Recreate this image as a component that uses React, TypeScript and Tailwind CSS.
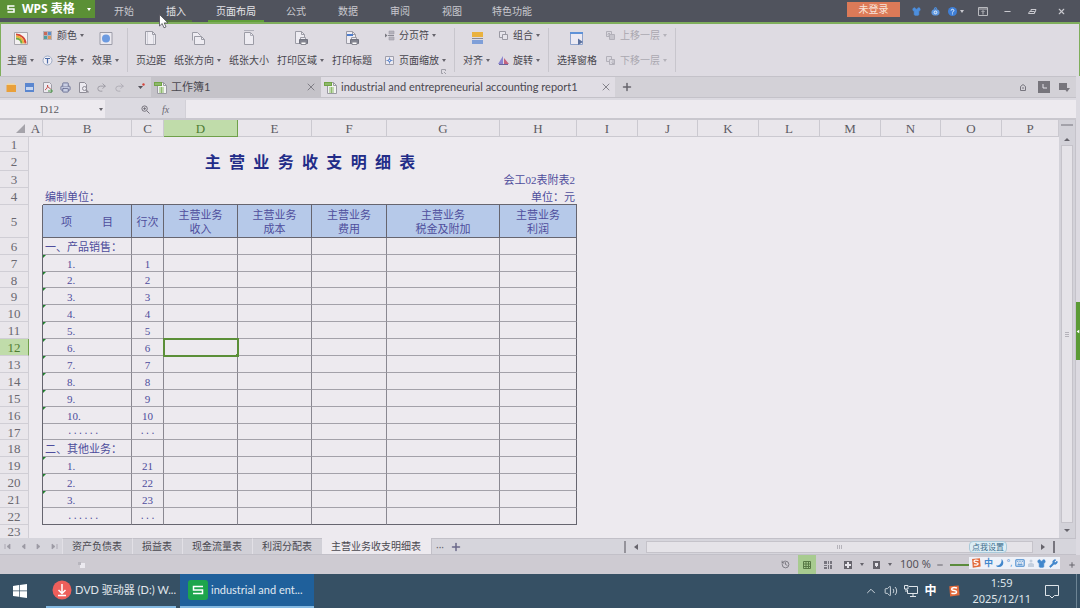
import React from 'react';
import { Volume2, ChevronUp, Undo2, Redo2, X, Plus, Minus, History, Printer, Shirt, Wrench, Keyboard } from 'lucide-react';

interface Column {
  id: string;
  width: string;
}

interface Row {
  id: number;
  height: string;
  item?: string;
  line?: string;
  heading?: boolean;
  marked?: boolean;
}

const menus = ['开始', '插入', '页面布局', '公式', '数据', '审阅', '视图', '特色功能'];
const sheets = ['资产负债表', '损益表', '现金流量表', '利润分配表', '主营业务收支明细表'];

const columns: Column[] = [
  { id: 'A', width: 'w-[14px]' },
  { id: 'B', width: 'w-[89px]' },
  { id: 'C', width: 'w-[32px]' },
  { id: 'D', width: 'w-[74px]' },
  { id: 'E', width: 'w-[74px]' },
  { id: 'F', width: 'w-[75px]' },
  { id: 'G', width: 'w-[113px]' },
  { id: 'H', width: 'w-[77px]' },
  { id: 'I', width: 'w-[61px]' },
  { id: 'J', width: 'w-[60px]' },
  { id: 'K', width: 'w-[61px]' },
  { id: 'L', width: 'w-[61px]' },
  { id: 'M', width: 'w-[61px]' },
  { id: 'N', width: 'w-[60px]' },
  { id: 'O', width: 'w-[61px]' },
  { id: 'P', width: '' },
];

const headings = [
  ['主营业务', '收入'],
  ['主营业务', '成本'],
  ['主营业务', '费用'],
  ['主营业务', '税金及附加'],
  ['主营业务', '利润'],
];

const rows: Row[] = [
  { id: 6, height: 'h-[17px]', item: '一、产品销售：', heading: true },
  { id: 7, height: 'h-[17px]', item: '1.', line: '1', marked: true },
  { id: 8, height: 'h-[16px]', item: '2.', line: '2', marked: true },
  { id: 9, height: 'h-[17px]', item: '3.', line: '3', marked: true },
  { id: 10, height: 'h-[17px]', item: '4.', line: '4', marked: true },
  { id: 11, height: 'h-[17px]', item: '5.', line: '5', marked: true },
  { id: 12, height: 'h-[17px]', item: '6.', line: '6', marked: true },
  { id: 13, height: 'h-[17px]', item: '7.', line: '7', marked: true },
  { id: 14, height: 'h-[17px]', item: '8.', line: '8', marked: true },
  { id: 15, height: 'h-[17px]', item: '9.', line: '9', marked: true },
  { id: 16, height: 'h-[17px]', item: '10.', line: '10', marked: true },
  { id: 17, height: 'h-[16px]', item: '......', line: '...' },
  { id: 18, height: 'h-[17px]', item: '二、其他业务：', heading: true },
  { id: 19, height: 'h-[17px]', item: '1.', line: '21', marked: true },
  { id: 20, height: 'h-[17px]', item: '2.', line: '22', marked: true },
  { id: 21, height: 'h-[17px]', item: '3.', line: '23', marked: true },
  { id: 22, height: 'h-[17px]', item: '......', line: '...' },
];

const Caret = ({ className = 'text-[#66646c]' }: { className?: string }) => (
  <svg viewBox="0 0 4 3" className={`h-[3px] w-1 shrink-0 ${className}`} fill="currentColor">
    <path d="M0 0h4L2 3z" />
  </svg>
);

const PageIcon = ({ kind }: { kind: 'margin' | 'turn' | 'size' | 'area' | 'title' }) => (
  <svg viewBox="0 0 16 16" className="h-4 w-4" fill="#eeecf2" stroke="#9c9ca6" strokeWidth="1">
    {kind === 'margin' && (
      <>
        <path d="M2.500 1.500h7l3 3v10h-10z" />
        <path d="M9.500 1.500v3h3" fill="none" />
        <path d="M4.500 2v12M10.500 5v9" fill="none" stroke="#cfcfd8" />
      </>
    )}
    {kind === 'turn' && (
      <>
        <path d="M2.500 10.500v-8h5l3 3" />
        <path d="M4.500 6.500h7l3 3v5h-10z" />
        <path d="M11.500 6.500v3h3" fill="none" />
      </>
    )}
    {kind === 'size' && (
      <>
        <path d="M3.500 2.500h6l3 3v9h-9z" />
        <path d="M9.500 2.500v3h3M3 .500h10" fill="none" stroke="#b0b0ba" />
      </>
    )}
    {(kind === 'area' || kind === 'title') && (
      <>
        <path d="M2.500 1.500h6l3 3v9h-9z" />
        <path d="M8.500 1.500v3h3" fill="none" />
        {kind === 'title' && <path d="M3 5h6" stroke="#4f7dcc" strokeWidth="2" />}
        <path d="M7.500 7.500h5v3h-5z" />
        <path d="M6.500 9.500h8v4h-8z" fill="#80828e" stroke="#70727e" />
        <path d="M8 12h5v2.500H8z" fill="#fff" stroke="#8a8a94" />
      </>
    )}
  </svg>
);

const ThemeIcon = () => (
  <svg viewBox="0 0 16 16" className="h-4 w-4" fill="none">
    <path d="M1.500 2.500h13v12h-13z" fill="#f4f1f2" stroke="#a9a7ae" />
    <path d="M3 4.500c5 0 9.500 4 9.500 9" stroke="#d4473a" strokeWidth="2" />
    <path d="M3 6.500c4 0 7.500 3 7.500 7" stroke="#efb23a" strokeWidth="2" />
    <path d="M3 8.500c3 0 5.500 2 5.500 5" stroke="#71a943" strokeWidth="2" />
  </svg>
);

const EffectIcon = () => (
  <svg viewBox="0 0 16 16" className="h-4 w-4">
    <path d="M2 2.500h12v12H2z" fill="#ebe9f0" stroke="#9c9ca8" />
    <circle cx="8" cy="8.500" r="4" fill="#6c9ae0" />
  </svg>
);

const AlignIcon = () => (
  <svg viewBox="0 0 16 16" className="h-4 w-4">
    <path d="M3 2h11v5H3z" fill="#eab23f" />
    <path d="M3 8.500h11" stroke="#8a8a92" />
    <path d="M3 10h11v4H3z" fill="#7f9fd8" />
  </svg>
);

const PaneIcon = () => (
  <svg viewBox="0 0 16 16" className="h-4 w-4">
    <path d="M1.500 2.500h12v12h-12z" fill="#eceaf3" stroke="#8fa3cb" />
    <path d="M1 2h13v2H1z" fill="#5f92d8" />
    <path d="M9 8.500l5 3.500-5 3z" fill="#5b719e" />
  </svg>
);

const ColorsIcon = () => (
  <svg viewBox="0 0 11 11" className="h-[11px] w-[11px]">
    <path d="M1 1h9v9H1z" fill="#b3b1ba" />
    <path d="M2 2h3v3H2z" fill="#c96a58" />
    <path d="M6 2h3v3H6z" fill="#5c8fca" />
    <path d="M2 6h3v3H2z" fill="#4f9f9e" />
    <path d="M6 6h3v3H6z" fill="#d8955a" />
  </svg>
);

const FontIcon = () => (
  <svg viewBox="0 0 11 11" className="h-[11px] w-[11px]" fill="none">
    <circle cx="5.500" cy="5.500" r="4.500" fill="#f0eef5" stroke="#9dabc4" />
    <path d="M3 3.500h5M5.500 3.500v5" stroke="#4d6da8" strokeWidth="1.200" />
  </svg>
);

const BreakIcon = () => (
  <svg viewBox="0 0 11 11" className="h-[11px] w-[11px]">
    <path d="M1 3.500l2.500 2L1 7.500z" fill="#787880" />
    <path d="M5 1h5v3H5zM5 7h5v3H5z" fill="#b5b3bc" stroke="#a09fa8" strokeWidth=".600" />
    <path d="M4 5.500h6" stroke="#8b8a94" />
  </svg>
);

const ScaleIcon = () => (
  <svg viewBox="0 0 11 11" className="h-[11px] w-[11px]" fill="none">
    <path d="M1.500 1.500h8v8h-8z" fill="#eceaf1" stroke="#a09fab" />
    <path d="M5.500 2.500v6M2.500 5.500h6" stroke="#6f92cc" />
    <path d="M4.500 4.500h2v2h-2z" fill="#eceaf1" stroke="#4f7dcc" strokeWidth=".700" />
  </svg>
);

const GroupIcon = () => (
  <svg viewBox="0 0 11 11" className="h-[11px] w-[11px]" fill="#e6e4eb" stroke="#9a99a3">
    <path d="M1.500 1.500h6v6h-6z" />
    <path d="M4.500 4.500h5v5h-5z" />
  </svg>
);

const RotateIcon = () => (
  <svg viewBox="0 0 11 11" className="h-[11px] w-[11px]">
    <path d="M5 1v8H0z" fill="#8b86d0" />
    <path d="M6 3l5 6H6z" fill="#c4627f" />
    <path d="M1 9.500h9" stroke="#68649c" />
  </svg>
);

const LayerIcon = ({ down }: { down?: boolean }) => (
  <svg viewBox="0 0 11 11" className="h-[11px] w-[11px]" fill="#dad8df" stroke="#b2b0b9">
    <path d="M1.500 1.500h5v5h-5z" />
    <path d="M4.500 4.500h5v5h-5z" fill={down ? '#dad8df' : '#c6c4cc'} />
    {down ? <path d="M8 5v4M6.500 7.500L8 9l1.500-1.500" fill="none" /> : <path d="M4 7V3M2.500 4.500L4 3l1.500 1.500" fill="none" />}
  </svg>
);

const SheetFileIcon = () => (
  <svg viewBox="0 0 13 13" className="h-[13px] w-[13px] shrink-0">
    <path d="M3.500 1.500h6l3 3v8h-9z" fill="#f3f3f3" stroke="#9a9aa2" />
    <path d="M9.500 1.500v3h3" fill="none" stroke="#9a9aa2" />
    <path d="M0 1h8v4H0z" fill="#71a545" />
    <path d="M1.500 3h5" stroke="#e6f1dc" strokeDasharray="1 1" />
    <path d="M5 7h5M5 9h5M5 11h5M7.500 6v6" stroke="#8fbb6c" />
  </svg>
);

const SogouIcon = ({ className }: { className: string }) => (
  <svg viewBox="0 0 14 14" className={className} fill="none">
    <path d="M1.500 1.500L12.500.500l1 11.500-11 1.500z" fill="#e2693a" />
    <path d="M10.500 3.500C7 2.500 4 3 4.300 5c.300 2 5.700 1 5.700 3.200 0 2-3.500 2-6 1.300" stroke="#fff" strokeWidth="1.800" />
  </svg>
);

interface ButtonProps {
  icon: React.ReactNode;
  label: string;
  caret?: boolean;
  muted?: boolean;
}

const LargeButton = ({ icon, label, caret }: ButtonProps) => (
  <button className="flex flex-col items-center justify-between pt-1 pb-2">
    <span className="flex h-5 items-center">{icon}</span>
    <span className="flex items-center gap-[3px] leading-4">
      {label}
      {caret && <Caret />}
    </span>
  </button>
);

const SmallButton = ({ icon, label, caret = true, muted }: ButtonProps) => (
  <button className={`flex items-center gap-1 leading-4 ${muted ? 'text-[#aaa8b0]' : ''}`}>
    {icon}
    <span className="flex items-center gap-[3px]">
      {label}
      {caret && <Caret className={muted ? 'text-[#b4b2ba]' : 'text-[#66646c]'} />}
    </span>
  </button>
);

const Stack = ({ children }: { children: React.ReactNode }) => (
  <div className="flex flex-col justify-between pt-[3px] pb-2">{children}</div>
);

const Divider = () => <div className="my-1 w-px bg-[#c8c6cd]" />;

const TitleBar = () => (
  <header className="flex h-[22px] shrink-0 justify-between bg-[#50535d] text-[#c9c9cf]">
    <div className="flex">
      <button className="mr-[3px] flex h-[18px] w-[95px] items-center bg-[#5b9035] pl-[7px] text-xs font-bold text-white">
        <svg viewBox="0 0 8 8" className="mr-[7px] h-2 w-2" fill="none" stroke="#fff" strokeWidth="1.500">
          <path d="M7.500 1H1v3h6v3H.500" />
        </svg>
        WPS 表格
        <span className="ml-auto pr-1">
          <Caret className="text-white" />
        </span>
      </button>
      <nav className="flex">
        {menus.map((name) => (
          <button
            key={name}
            className={`border-b-2 pt-[3px] ${name.length > 2 ? 'mx-1.5 px-2' : 'mx-2.5 px-1.5'} ${
              name === '页面布局' ? 'border-[#62a03a] text-[#e4e4e8]' : name === '插入' ? 'border-[#55743f] text-[#e4e4e8]' : 'border-transparent'
            }`}
          >
            {name}
          </button>
        ))}
      </nav>
    </div>
    <div className="flex items-center pr-3.5">
      <button className="mt-0.5 mr-3 h-[15px] w-[53px] self-start bg-[#dc7a58] leading-[15px] text-[#f9e4da]">未登录</button>
      <button aria-label="皮肤" className="mr-2.5">
        <Shirt className="h-[9px] w-[9px] text-[#4d8fdd]" fill="#4d8fdd" />
      </button>
      <button aria-label="云服务" className="mr-2">
        <svg viewBox="0 0 10 10" className="h-[9px] w-[9px]" fill="none">
          <path d="M3.500 3C4 0 6 0 6.500 3" stroke="#4d8fdd" strokeWidth="1.300" />
          <ellipse cx="5" cy="6" rx="4.500" ry="3.500" fill="#5f98e0" />
          <circle cx="5" cy="6" r="1.500" stroke="#f3f7fc" />
        </svg>
      </button>
      <button aria-label="帮助" className="mr-3.5 flex items-center gap-[3px]">
        <svg viewBox="0 0 10 10" className="h-[9px] w-[9px]" fill="none">
          <circle cx="5" cy="5" r="5" fill="#3f7fd6" />
          <path d="M3.500 4c0-2 3-2 3 0 0 1-1.500 1-1.500 2.200M5 7.200v1" stroke="#fff" />
        </svg>
        <Caret className="text-[#c9c9cf]" />
      </button>
      <button aria-label="功能区" className="mr-[15px]">
        <svg viewBox="0 0 10 10" className="h-[10px] w-[10px]" fill="none" stroke="#b9babf">
          <path d="M.500 1.500h9v8h-9zM.500 3h9M5 8.500V5M3.500 6L5 4.500 6.500 6" />
        </svg>
      </button>
      <button aria-label="最小化" className="mr-4">
        <Minus className="h-[9px] w-[9px]" strokeWidth={3} />
      </button>
      <button aria-label="还原" className="mr-5">
        <svg viewBox="0 0 9 9" className="h-[9px] w-[9px]" fill="none" stroke="#c9c9cf">
          <path d="M1.500 4.500h5v2h-6zM3 4.500v-2h5l-1 3" />
        </svg>
      </button>
      <button aria-label="关闭">
        <X className="h-[9px] w-[9px]" strokeWidth={3} />
      </button>
    </div>
  </header>
);

const Ribbon = () => (
  <section className="flex h-[54px] shrink-0 gap-2 border-x border-t-2 border-[#7fae5c] bg-[#dedbe2] pl-1.5 text-[#47454d]">
    <LargeButton icon={<ThemeIcon />} label="主题" caret />
    <Stack>
      <SmallButton icon={<ColorsIcon />} label="颜色" />
      <SmallButton icon={<FontIcon />} label="字体" />
    </Stack>
    <LargeButton icon={<EffectIcon />} label="效果" caret />
    <Divider />
    <LargeButton icon={<PageIcon kind="margin" />} label="页边距" />
    <LargeButton icon={<PageIcon kind="turn" />} label="纸张方向" caret />
    <LargeButton icon={<PageIcon kind="size" />} label="纸张大小" />
    <LargeButton icon={<PageIcon kind="area" />} label="打印区域" caret />
    <LargeButton icon={<PageIcon kind="title" />} label="打印标题" />
    <div className="relative ml-1 flex">
      <Stack>
        <SmallButton icon={<BreakIcon />} label="分页符" />
        <SmallButton icon={<ScaleIcon />} label="页面缩放" />
      </Stack>
      <svg viewBox="0 0 5 5" className="absolute right-0 bottom-[2px] h-[5px] w-[5px]" fill="none" stroke="#a09fa8">
        <path d="M4.500 2V.500h-4v4H2M3 3l2 2" />
      </svg>
    </div>
    <Divider />
    <LargeButton icon={<AlignIcon />} label="对齐" caret />
    <Stack>
      <SmallButton icon={<GroupIcon />} label="组合" />
      <SmallButton icon={<RotateIcon />} label="旋转" />
    </Stack>
    <Divider />
    <LargeButton icon={<PaneIcon />} label="选择窗格" />
    <Stack>
      <SmallButton icon={<LayerIcon />} label="上移一层" muted />
      <SmallButton icon={<LayerIcon down />} label="下移一层" muted />
    </Stack>
    <Divider />
  </section>
);

const QuickAccess = () => (
  <div className="flex w-[151px] shrink-0 items-center gap-[7px] pl-1.5 text-[#77757e]">
    <button aria-label="打开">
      <svg viewBox="0 0 11 11" className="h-[11px] w-[11px]">
        <path d="M1 1.500h8v3H1z" fill="#f3d69a" />
        <path d="M.500 3h9.500v7H.500z" fill="#e9a03a" />
      </svg>
    </button>
    <button aria-label="保存">
      <svg viewBox="0 0 11 11" className="h-[11px] w-[11px]">
        <path d="M1 1h9v9H1z" fill="#5a86cf" />
        <path d="M2 5h7v3H2z" fill="#c6d6f1" />
      </svg>
    </button>
    <button aria-label="输出PDF">
      <svg viewBox="0 0 11 11" className="h-[11px] w-[11px]" fill="none">
        <path d="M1.500.500h6l2 2v8h-8z" fill="#eceaf0" stroke="#a09ea8" />
        <path d="M3 8c2-1 3-4 2.500-5 0 2 1 3 3 3.500" stroke="#c5504c" />
        <path d="M6 9h4M8.500 7l2 2-2 2" stroke="#4c9a48" />
      </svg>
    </button>
    <button aria-label="打印">
      <Printer className="h-[11px] w-[11px] text-[#6a7094]" fill="#c9cfe4" strokeWidth={2} />
    </button>
    <button aria-label="打印预览">
      <svg viewBox="0 0 11 11" className="h-[11px] w-[11px]" fill="none" stroke="#8f8d97">
        <path d="M1.500.500h5l2 2v8h-7z" fill="#eceaf0" />
        <circle cx="6.500" cy="6.500" r="2" />
        <path d="M8 8l2.500 2.500" strokeWidth="1.500" />
      </svg>
    </button>
    <button aria-label="撤销">
      <Undo2 className="h-[11px] w-[11px] -scale-x-100 text-[#9a98a1]" />
    </button>
    <button aria-label="恢复">
      <Redo2 className="h-[11px] w-[11px] text-[#aeacb4]" />
    </button>
    <button aria-label="自定义" className="ml-auto pr-1.5">
      <svg viewBox="0 0 8 8" className="h-2 w-2">
        <path d="M1 3h5L3.500 6z" fill="#55535b" />
        <circle cx="6.500" cy="1.500" r="1.200" fill="#d64339" />
      </svg>
    </button>
  </div>
);

const DocumentTabs = () => (
  <div className="flex h-[22px] shrink-0 border-y border-[#c4c2c9] bg-[#d3d1d7] font-['Lato','Noto_Sans_CJK_SC',sans-serif] text-[11px] text-[#4a4850]">
    <QuickAccess />
    <div className="flex w-[170px] items-center bg-[#c5c3c9] pr-1 pl-[3px]">
      <SheetFileIcon />
      <span className="ml-1 flex-1">工作簿1</span>
      <button aria-label="关闭工作簿1">
        <X className="h-3 w-3 text-[#67656d]" strokeWidth={1.500} />
      </button>
    </div>
    <div className="flex w-[294px] items-center bg-[#e0dde4] px-[3px]">
      <SheetFileIcon />
      <span className="ml-1 flex-1 whitespace-nowrap">industrial and entrepreneurial accounting report1</span>
      <button aria-label="关闭文档">
        <X className="h-3 w-3 text-[#67656d]" strokeWidth={1.500} />
      </button>
    </div>
    <button aria-label="新建" className="px-1.5">
      <Plus className="h-3 w-3 text-[#67656d]" strokeWidth={3} />
    </button>
    <div className="ml-auto flex items-center gap-2 pr-1.5">
      <svg viewBox="0 0 6 7" className="mr-1 h-[7px] w-1.5" fill="none" stroke="#77757e">
        <path d="M.500 2.500L3 .500l2.500 2v4h-5zM3 3v2" />
      </svg>
      <svg viewBox="0 0 12 12" className="h-3 w-3">
        <path d="M0 0h12v12H0z" fill="#77757c" />
        <path d="M5 3v4h4" stroke="#e4e2e8" fill="none" />
      </svg>
      <svg viewBox="0 0 12 12" className="h-3 w-3" fill="#77757c">
        <path d="M1 2h8v7H1zM6 7h6l-3 4z" />
      </svg>
    </div>
  </div>
);

const FormulaBar = () => (
  <div className="flex h-[22px] shrink-0 items-stretch border-b-2 border-[#c9c7ce] bg-[#dcdae1] pt-0.5">
    <div className="flex w-[105px] items-center bg-[#edeaef] pr-0.5">
      <input
        aria-label="名称框"
        defaultValue="D12"
        className="w-[93px] min-w-0 flex-1 bg-transparent text-center font-['Liberation_Serif','Noto_Sans_CJK_SC',serif] text-[11px] text-[#5c5a62] outline-none"
      />
      <Caret />
    </div>
    <div className="flex w-20 items-center justify-center gap-3 pl-5 text-[#6b6972]">
      <svg viewBox="0 0 10 10" className="h-[9px] w-[9px]" fill="none" stroke="currentColor">
        <circle cx="4" cy="4" r="3" />
        <path d="M6.500 6.500l3 3M4 2.500v3M2.500 4h3" />
      </svg>
      <button className="font-['Liberation_Serif',serif] text-[10px] italic">fx</button>
    </div>
    <input aria-label="编辑栏" className="min-w-0 flex-1 border-l border-[#d2d0d7] bg-[#edeaef] px-1 outline-none" />
  </div>
);

const RowHeader = ({ id }: { id: number }) => (
  <th
    className={`border-r p-0 text-[13px] leading-[13px] font-normal ${id === 23 ? '' : 'border-b pt-px'} ${
      id === 12 ? 'border-[#d0ced5] border-r-[#6fa04a] bg-[#c0dcaa] text-[#4f7d33]' : 'border-[#d0ced5] bg-[#e9e6eb] text-[#6a6870]'
    }`}
  >
    {id}
  </th>
);

const dotClass = "font-['Liberation_Mono',monospace] text-[9px]";

const Sheet = () => (
  <div className="min-w-0 flex-1 overflow-hidden bg-[#edeaef]">
    <table className="w-full table-fixed border-separate border-spacing-0 font-['Liberation_Serif','Noto_Sans_CJK_SC',serif] text-[11px] leading-[14px] text-[#4e4d9c]">
      <colgroup>
        <col className="w-[29px]" />
        {columns.map((col) => (
          <col key={col.id} className={col.width} />
        ))}
      </colgroup>
      <thead>
        <tr className="h-[17px] bg-[#e9e6eb] text-[13px] text-[#5d5b63]">
          <th className="border-b border-[#cbc9d0] p-0">
            <svg viewBox="0 0 9 9" className="mr-1 ml-auto h-[9px] w-[9px]">
              <path d="M9 0v9H0z" fill="#a5a3aa" />
            </svg>
          </th>
          {columns.map((col) => (
            <th
              key={col.id}
              className={`border-r border-b p-0 pt-0.5 font-normal ${
                col.id === 'D' ? 'border-[#6fa04a] bg-[#c0dcaa] text-[#4f7d33]' : 'border-[#cbc9d0]'
              }`}
            >
              {col.id}
            </th>
          ))}
        </tr>
      </thead>
      <tbody>
        <tr className="h-[15px]">
          <RowHeader id={1} />
          <td colSpan={16} />
        </tr>
        <tr className="h-[19px]">
          <RowHeader id={2} />
          <td />
          <td colSpan={7} className="p-0 text-center font-['Noto_Sans','Noto_Sans_CJK_SC',sans-serif] text-base leading-[18px] font-bold whitespace-pre text-[#222c88]">
            {'主  营  业  务  收  支  明  细  表'}
          </td>
          <td colSpan={8} />
        </tr>
        <tr className="h-[17px]">
          <RowHeader id={3} />
          <td colSpan={6} />
          <td colSpan={2} className="p-0 pr-0.5 text-right">会工02表附表2</td>
          <td colSpan={8} />
        </tr>
        <tr className="h-[17px]">
          <RowHeader id={4} />
          <td className="border-r border-transparent" />
          <td colSpan={2} className="border-b border-[#66656f] p-0 pt-0.5 pl-0.5">编制单位：</td>
          <td colSpan={4} className="border-b border-[#66656f]" />
          <td className="border-b border-[#66656f] p-0 pt-0.5 pr-0.5 text-right">单位：元</td>
          <td colSpan={8} />
        </tr>
        <tr className="h-[33px]">
          <RowHeader id={5} />
          <td className="border-r border-[#66656f]" />
          <th className="border-r border-b border-[#66656f] bg-[#b6c9e9] p-0 pt-0.5 font-normal whitespace-pre">{'项　　   目'}</th>
          <th className="border-r border-b border-[#66656f] bg-[#b6c9e9] p-0 pt-0.5 font-normal">行次</th>
          {headings.map(([top, bottom]) => (
            <th key={bottom} className="border-r border-b border-[#66656f] bg-[#b6c9e9] p-0 pt-0.5 font-normal">
              {top}
              <br />
              {bottom}
            </th>
          ))}
          <td colSpan={8} />
        </tr>
        {rows.map((row) => {
          const line = row.id === 22 ? 'border-b-[#66656f]' : 'border-b-[#a3a1a9]';
          const dots = row.line === '...' ? dotClass : '';
          return (
            <tr key={row.id} className={`leading-[13px] ${row.height}`}>
              <RowHeader id={row.id} />
              <td className="border-r border-[#66656f]" />
              <td className={`relative border-r border-b border-r-[#8a8891] p-0 pt-0.5 ${line} ${row.heading ? 'pl-0.5' : 'pl-6'} ${dots}`}>
                {row.marked && (
                  <svg viewBox="0 0 3 3" className="absolute top-0 left-0 h-[3px] w-[3px]">
                    <path d="M0 0h3L0 3z" fill="#1f7f2c" />
                  </svg>
                )}
                {row.item}
              </td>
              <td className={`border-r border-b border-r-[#8a8891] p-0 pt-0.5 text-center ${line} ${dots}`}>{row.line}</td>
              {['D', 'E', 'F', 'G', 'H'].map((col) => (
                <td
                  key={col}
                  className={`border-r border-b p-0 ${line} ${col === 'H' ? 'border-r-[#66656f]' : 'border-r-[#8a8891]'} ${
                    row.id === 12 && col === 'D' ? 'relative outline-2 -outline-offset-1 outline-[#5b8f38]' : ''
                  }`}
                >
                  {row.id === 12 && col === 'D' && <span className="absolute -right-0.5 -bottom-0.5 h-[3px] w-[3px] bg-[#5b8f38]" />}
                </td>
              ))}
              <td colSpan={8} />
            </tr>
          );
        })}
        <tr className="h-[13px]">
          <RowHeader id={23} />
          <td colSpan={16} className="p-0" />
        </tr>
      </tbody>
    </table>
  </div>
);

const VerticalScroll = () => (
  <div className="flex w-[17px] shrink-0 flex-col items-center border-r border-[#c5c3ca] bg-[#d3d2d9] px-0.5">
    <div className="mt-1 h-0.5 w-full bg-[#a3a2aa]" />
    <button aria-label="向上滚动" className="flex h-[19px] items-center pt-2">
      <svg viewBox="0 0 6 3" className="h-[3px] w-1.5" fill="#66646c">
        <path d="M3 0l3 3H0z" />
      </svg>
    </button>
    <div className="flex w-full flex-1 items-center justify-center border border-[#c5c3ca] bg-[#e5e3e8]">
      <svg viewBox="0 0 4 5" className="h-[5px] w-1" stroke="#b5b3ba">
        <path d="M0 .500h4M0 2.500h4M0 4.500h4" />
      </svg>
    </div>
    <button aria-label="向下滚动" className="flex h-[15px] items-center">
      <svg viewBox="0 0 6 3" className="h-[3px] w-1.5" fill="#66646c">
        <path d="M0 0h6L3 3z" />
      </svg>
    </button>
  </div>
);

const arrows = [
  { name: '第一张', path: 'M1 1v5M6 1L3 3.500 6 6z' },
  { name: '上一张', path: 'M5 1L2 3.500 5 6z' },
  { name: '下一张', path: 'M2 1l3 2.500L2 6z' },
  { name: '最后一张', path: 'M1 1l3 2.500L1 6zM6 1v5' },
];

const SheetTabs = () => (
  <div className="flex h-[17px] shrink-0 border-b border-[#c2c0c8] bg-[#d6d5dc] text-[#4a4850]">
    <div className="flex w-[62px] items-center justify-around">
      {arrows.map((arrow) => (
        <button key={arrow.name} aria-label={arrow.name}>
          <svg viewBox="0 0 7 7" className="h-[7px] w-[7px]" fill="#9b9aa3" stroke="#9b9aa3" strokeWidth=".700">
            <path d={arrow.path} />
          </svg>
        </button>
      ))}
    </div>
    {sheets.map((name) => (
      <button
        key={name}
        className={`pr-2.5 pl-[9px] ${name === '主营业务收支明细表' ? 'bg-[#edeaef]' : 'border-t border-l border-t-[#c2c0c8] border-l-[#e2e0e6] bg-[#d1d0d7]'}`}
      >
        {name}
      </button>
    ))}
    <div className="flex flex-1 items-center gap-1.5 border-t border-l border-[#c2c0c8] pl-1">
      <button className="leading-3 text-[#67656d]">···</button>
      <button aria-label="新建工作表">
        <Plus className="h-3 w-3 text-[#6a6789]" strokeWidth={3} />
      </button>
    </div>
    <div className="relative flex w-[452px] items-center gap-2 border-t border-[#c2c0c8]">
      <span className="h-3 w-0.5 bg-[#95939b]" />
      <svg viewBox="0 0 4 6" className="h-1.5 w-1" fill="#66646c">
        <path d="M4 0v6L0 3z" />
      </svg>
      <div className="flex h-3 w-[387px] items-center justify-center border border-[#c5c3ca] bg-[#e5e3e8]">
        <svg viewBox="0 0 5 4" className="h-1 w-[5px]" stroke="#b5b3ba">
          <path d="M.500 0v4M2.500 0v4M4.500 0v4" />
        </svg>
      </div>
      <svg viewBox="0 0 4 6" className="h-1.5 w-1" fill="#66646c">
        <path d="M0 0v6l4-3z" />
      </svg>
      <span className="h-3 w-0.5 bg-[#77757e]" />
      <button className="absolute top-0.5 left-[345px] h-3 rounded-sm border border-[#a9c9d9] bg-[#dcedf4] px-0.5 text-[8px] leading-[10px] whitespace-nowrap text-[#3c6c8c]">
        点我设置
      </button>
    </div>
  </div>
);

const ImeBar = () => (
  <div className="absolute top-0.5 right-5 flex h-3 w-[91px] items-center justify-between bg-[#eef1f8] px-0.5 text-[#4287cc]">
    <SogouIcon className="h-2.5 w-2.5" />
    <span className="text-[9px] leading-3 font-bold">中</span>
    <svg viewBox="0 0 8 8" className="h-2 w-2" fill="currentColor">
      <path d="M5.500 0C9 3 7 8 3 8 1.500 8 .500 7.500 0 6.500c3.500.500 6-2.500 5.500-6.500z" />
    </svg>
    <span className="text-[8px] leading-3">°,</span>
    <Keyboard className="h-2.5 w-2.5" strokeWidth={2.500} />
    <svg viewBox="0 0 6 8" className="h-2 w-1.5" fill="#c3cfdf">
      <path d="M1.500 2a1.500 1.500 0 103 0 1.500 1.500 0 10-3 0M0 8V5l2-1h2l2 1v3z" />
    </svg>
    <Shirt className="h-[9px] w-[9px]" fill="currentColor" />
    <Wrench className="h-[9px] w-[9px]" fill="currentColor" strokeWidth={2} />
  </div>
);

const StatusBar = () => (
  <footer className="flex h-[19px] shrink-0 items-center justify-between bg-[#cecbd2] text-[#66646c]">
    <svg viewBox="0 0 8 8" className="ml-[78px] h-2 w-2">
      <path d="M2 2h5v5H2z" fill="#eceaf0" />
      <path d="M0 1h3v3H0z" fill="#b8b6be" />
    </svg>
    <div className="relative flex h-full items-center pr-1">
      <History className="mr-2 h-[9px] w-[9px]" />
      <button aria-label="普通视图" className="flex h-full w-[18px] items-center justify-center bg-[#a8cb90]">
        <svg viewBox="0 0 8 8" className="h-2 w-2" fill="none" stroke="#587845">
          <path d="M.500.500h7v7h-7zM3 .500v7M5.500.500v7M.500 3h7M.500 5.500h7" />
        </svg>
      </button>
      <button aria-label="分页预览" className="mr-3 ml-2">
        <svg viewBox="0 0 8 8" className="h-2 w-2" fill="#77757e">
          <path d="M0 0h3v3H0zM4 0h1v3H4zM6 0h2v3H6zM0 4h3v1H0zM0 6h3v2H0zM4 4h1v4H4zM6 4h2v4H6z" />
        </svg>
      </button>
      <button aria-label="阅读模式" className="flex items-center gap-2">
        <svg viewBox="0 0 8 8" className="h-2 w-2">
          <path d="M0 0h8v8H0z" fill="#66646c" />
          <path d="M4 1v6M1 4h6" stroke="#e6e4ea" strokeWidth="2" />
        </svg>
        <Caret />
      </button>
      <button aria-label="护眼模式" className="mx-2 flex items-center gap-2">
        <svg viewBox="0 0 8 8" className="h-2 w-2">
          <path d="M1 0h7v8H1z" fill="#66646c" />
          <path d="M3 2h3v3H5v1H4V5H3z" fill="#e6e4ea" />
        </svg>
        <Caret />
      </button>
      <span className="w-9 text-[11px] whitespace-nowrap text-[#55535b]">100 %</span>
      <button aria-label="缩小" className="mr-1.5">
        <Minus className="h-2 w-2" strokeWidth={3} />
      </button>
      <input
        aria-label="显示比例"
        type="range"
        defaultValue={50}
        className="h-0.5 w-[110px] appearance-none bg-[#5b8b3c] [&::-webkit-slider-thumb]:h-0.5 [&::-webkit-slider-thumb]:w-0.5 [&::-webkit-slider-thumb]:appearance-none"
      />
      <button aria-label="放大" className="ml-2">
        <Plus className="h-2 w-2" strokeWidth={3} />
      </button>
      <ImeBar />
    </div>
  </footer>
);

const Taskbar = () => (
  <div className="flex h-[34px] shrink-0 justify-between bg-[#365064] text-[11px] text-white">
    <div className="flex font-['Lato','Noto_Sans_CJK_SC',sans-serif]">
      <button aria-label="开始菜单" className="flex w-[46px] items-center pl-[13px]">
        <svg viewBox="0 0 14 14" className="h-3.5 w-3.5" fill="#fff">
          <path d="M0 2l6-.900v5.500H0zM6.700 1L14 0v6.600H6.700zM0 7.300h6v5.500L0 12zM6.700 7.300H14V14l-7.300-1z" />
        </svg>
      </button>
      <button className="mr-1 flex w-[130px] items-center gap-[3px] border-b-2 border-[#84b9e2] pl-1.5 whitespace-nowrap text-[#e0e6eb]">
        <svg viewBox="0 0 20 20" className="h-5 w-5" fill="none">
          <circle cx="10" cy="10" r="9.500" fill="#ee5f5b" />
          <path d="M10 4v9M6.500 10l3.500 3.500 3.500-3.500M6 15.500h8" stroke="#fff" strokeWidth="1.500" />
        </svg>
        DVD 驱动器 (D:) W...
      </button>
      <button className="flex w-[134px] items-center gap-[3px] border-b-2 border-[#84b9e2] bg-[#1f609b] pl-2 whitespace-nowrap text-[#e0e9f1]">
        <svg viewBox="0 0 20 20" className="h-5 w-5" fill="none">
          <rect width="20" height="20" rx="3" fill="#1ea54c" />
          <path d="M15 6.500H5.500v3.500h9v3.500H5" stroke="#fff" strokeWidth="1.500" />
        </svg>
        industrial and ent...
      </button>
    </div>
    <div className="flex items-center text-[#dfe5ea]">
      <ChevronUp className="mr-1.5 h-3.5 w-3.5" strokeWidth={1.500} />
      <Volume2 className="mr-1.5 h-3.5 w-3.5" strokeWidth={1.500} />
      <svg viewBox="0 0 14 14" className="mr-1.5 h-3.5 w-3.5" fill="none" stroke="currentColor">
        <path d="M5 2.500h8.500v7H3.500V6M.500 1.500h3.500v3.500H.500zM2 5v3M6 12.500h6M9 9.500v3" />
      </svg>
      <span className="mr-3 text-xs font-bold text-white">中</span>
      <SogouIcon className="mr-3 h-3 w-3" />
      <div className="mr-[13px] text-center text-[11px] leading-4">
        <div>1:59</div>
        <div>2025/12/11</div>
      </div>
      <svg viewBox="0 0 16 16" className="mr-4 h-4 w-4" fill="none" stroke="currentColor">
        <path d="M1.500 2.500h13v10h-4L8 15l-2.500-2.500h-4z" />
      </svg>
      <span className="h-full w-1 border-l border-[#6d8494]" />
    </div>
  </div>
);

const App: React.FC = () => {
  return (
    <div className="relative flex h-screen flex-col overflow-hidden bg-[#dcdae1] font-['Noto_Sans','Noto_Sans_CJK_SC',sans-serif] text-[10px]">
      <TitleBar />
      <Ribbon />
      <div className="flex min-h-0 flex-1">
        <main className="flex min-w-0 flex-1 flex-col">
          <DocumentTabs />
          <FormulaBar />
          <div className="flex min-h-0 flex-1">
            <Sheet />
            <VerticalScroll />
          </div>
          <SheetTabs />
        </main>
        <aside className="flex w-1 shrink-0 flex-col bg-[#dcdae1] pt-[226px]">
          <button aria-label="展开任务窗格" className="flex h-[58px] w-1 items-center bg-[#5b9a35]">
            <Caret className="rotate-90 text-white" />
          </button>
        </aside>
      </div>
      <StatusBar />
      <Taskbar />
      {/* mouse pointer */}
      <svg viewBox="0 0 10 15" className="pointer-events-none absolute top-[14px] left-[159px] h-[15px] w-2.5">
        <path d="M.500.500v11.500l2.700-2.400 1.800 4.200 2-.900-1.800-4h3.800z" fill="#fff" stroke="#4c4c55" strokeWidth=".800" />
      </svg>
    </div>
  );
};

export default App;
